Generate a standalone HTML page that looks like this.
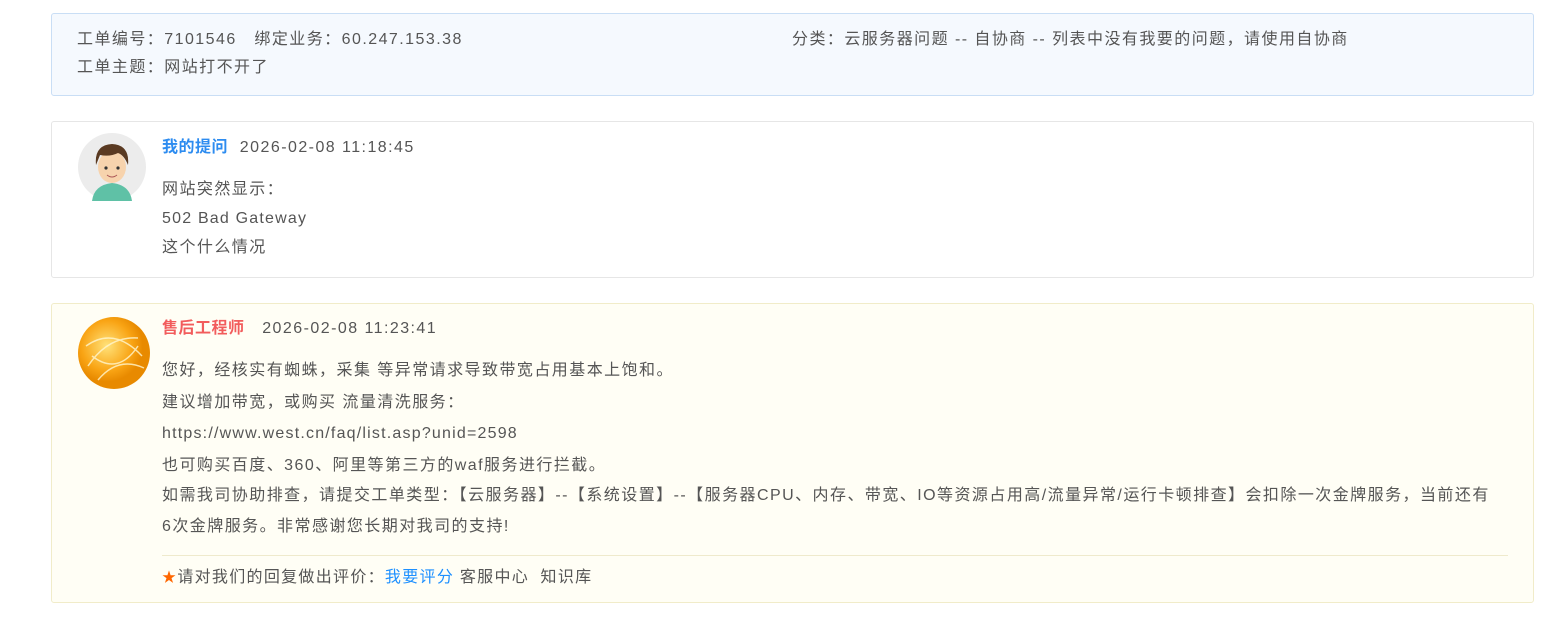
<!DOCTYPE html>
<html><head><meta charset="utf-8"><style>
body{margin:0;background:#fff;font-family:"Liberation Sans","Noto Sans CJK SC",sans-serif;color:#555;font-size:16px;width:1568px;height:622px;overflow:hidden;position:relative;letter-spacing:1.45px}
.box{position:absolute;left:51px;width:1483px;border:1px solid;border-radius:3px;box-sizing:border-box}
.t{position:absolute;white-space:nowrap;line-height:20px}
</style></head><body>
<div class="box" style="top:13px;height:83px;background:#f5f9fe;border-color:#c9def5"></div>
<div class="t" style="left:77px;top:30px">工单编号：7101546 &nbsp; 绑定业务：60.247.153.38</div>
<div class="t" style="left:792px;top:30px">分类：云服务器问题 -- 自协商 -- 列表中没有我要的问题，请使用自协商</div>
<div class="t" style="left:77px;top:58px">工单主题：网站打不开了</div>

<div class="box" style="top:121px;height:157px;background:#fff;border-color:#e6e6e6"></div>
<svg style="position:absolute;left:78px;top:133px" width="68" height="68" viewBox="0 0 68 68">
<circle cx="34" cy="34" r="34" fill="#ececec"/>
<path d="M14 68 Q16 52 34 50 Q52 52 54 68Z" fill="#5fc1a6"/>
<ellipse cx="34" cy="34" rx="14" ry="16" fill="#f7d3ad"/>
<path d="M18 32 Q16 12 34 11 Q52 12 50 32 Q46 22 40 20 Q32 24 22 22Z" fill="#5a3a22"/>
<circle cx="28" cy="35" r="1.6" fill="#333"/><circle cx="40" cy="35" r="1.6" fill="#333"/>
<path d="M29 42 Q34 46 39 42" stroke="#a55" fill="none"/>
</svg>
<div class="t" style="left:162px;top:138px"><b style="color:#2d8cf0;letter-spacing:0.5px">我的提问</b>&nbsp; 2026-02-08 11:18:45</div>
<div class="t" style="left:162px;top:180px">网站突然显示：</div>
<div class="t" style="left:162px;top:209px;letter-spacing:1.2px">502 Bad Gateway</div>
<div class="t" style="left:162px;top:238px">这个什么情况</div>

<div class="box" style="top:303px;height:300px;background:#fffef5;border-color:#f1ecc9"></div>
<svg style="position:absolute;left:78px;top:316px" width="72" height="74" viewBox="0 0 72 74">
<defs><radialGradient id="g" cx="40%" cy="40%"><stop offset="0" stop-color="#ffe27a"/><stop offset=".7" stop-color="#f9a414"/><stop offset="1" stop-color="#e88a00"/></radialGradient></defs>
<circle cx="36" cy="37" r="36" fill="url(#g)"/>
<path d="M8 30 Q36 10 64 40 M10 50 Q30 20 60 22 M20 64 Q40 40 66 52 M14 40 Q40 60 60 30" stroke="#fff6d0" stroke-width="1.5" fill="none" opacity=".8"/>
</svg>
<div class="t" style="left:162px;top:319px"><b style="color:#f25c5c;letter-spacing:0.5px">售后工程师</b>&nbsp;&nbsp; 2026-02-08 11:23:41</div>
<div class="t" style="left:162px;top:361px">您好，经核实有蜘蛛，采集 等异常请求导致带宽占用基本上饱和。</div>
<div class="t" style="left:162px;top:393px">建议增加带宽，或购买 流量清洗服务：</div>
<div class="t" style="left:162px;top:424px;letter-spacing:1.2px">https://www.west.cn/faq/list.asp?unid=2598</div>
<div class="t" style="left:162px;top:456px">也可购买百度、360、阿里等第三方的waf服务进行拦截。</div>
<div class="t" style="left:162px;top:486px">如需我司协助排查，请提交工单类型：【云服务器】--【系统设置】--【服务器CPU、内存、带宽、IO等资源占用高/流量异常/运行卡顿排查】会扣除一次金牌服务，当前还有</div>
<div class="t" style="left:162px;top:517px">6次金牌服务。非常感谢您长期对我司的支持!</div>
<div style="position:absolute;left:162px;top:555px;width:1346px;height:1px;background:#efeacc"></div>
<div class="t" style="left:162px;top:567px;letter-spacing:1.3px"><span style="color:#f60;font-size:14px">★</span>请对我们的回复做出评价：<span style="color:#1e90ff">我要评分</span> 客服中心&nbsp; 知识库</div>
</body></html>
